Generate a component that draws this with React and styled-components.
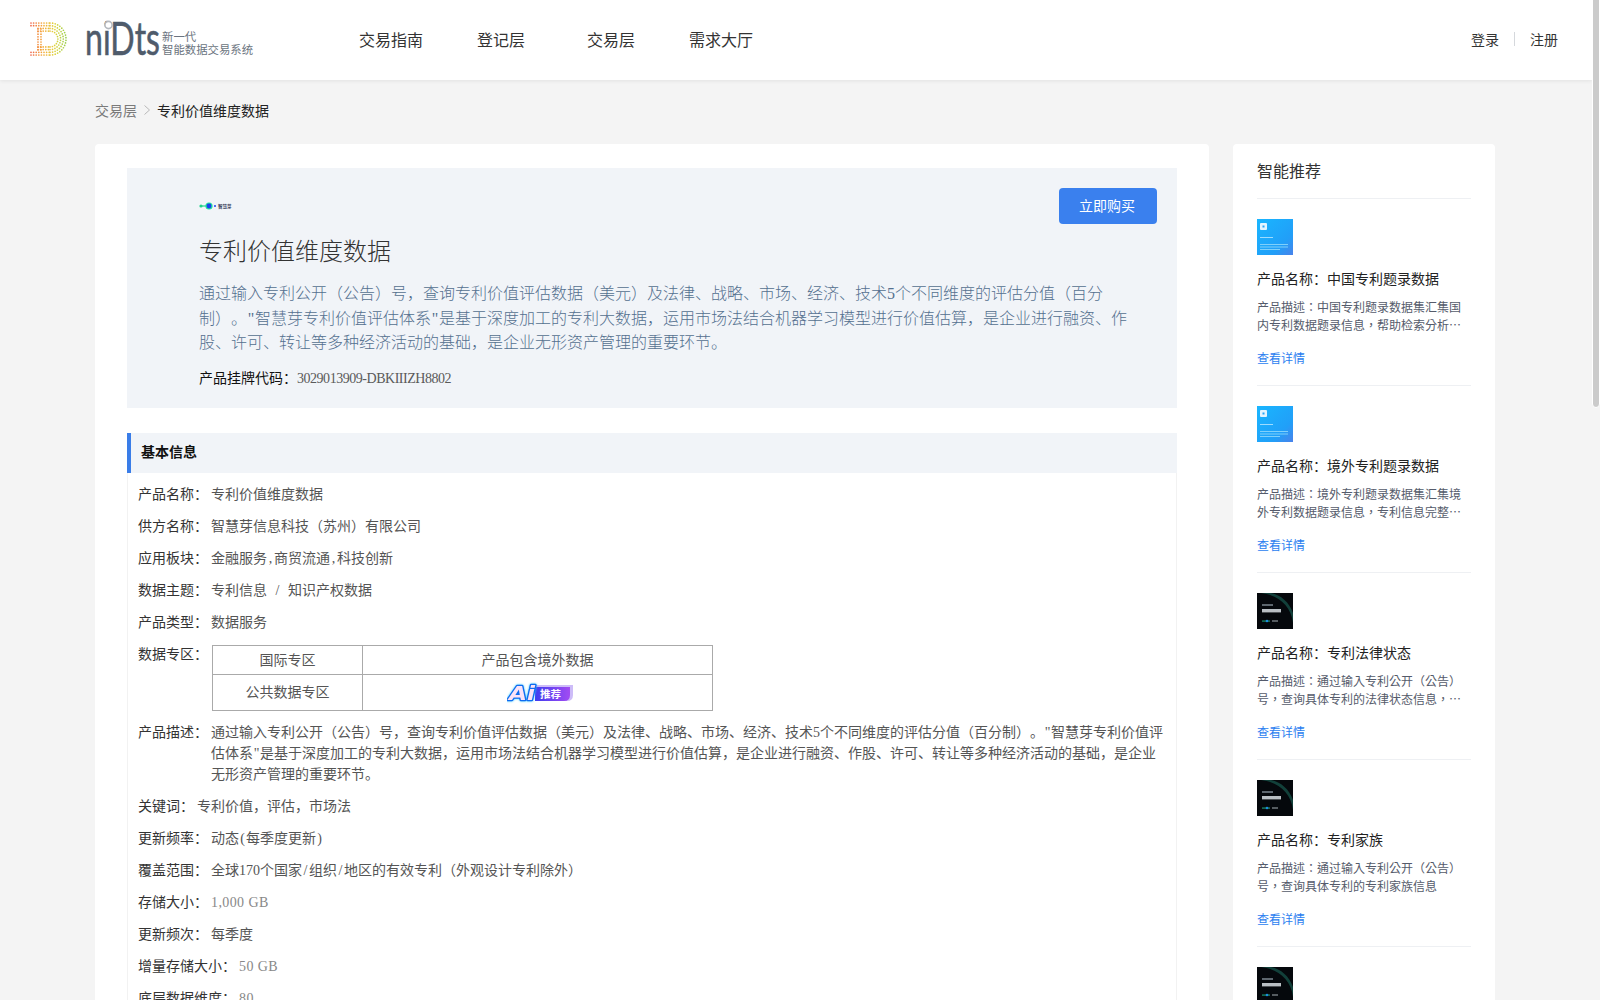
import React from 'react';
import styled, { createGlobalStyle } from 'styled-components';

const GlobalStyle = createGlobalStyle`
    html, body { background: #f4f4f4; }
    body {
        margin: 0;
        font-family: "Liberation Serif", "Noto Sans CJK SC", serif;
        font-size: 14px;
        color: #333;
        text-spacing-trim: space-all;
    }
`;

const Page = styled.div`
    min-height: 2450px;
    margin-right: 8px;
`;
// the window's own scrollbar does not get photographed
const ScrollThumb = styled.div`
    position: fixed;
    top: -4px;
    right: 0;
    width: 8px;
    height: 412px;
    box-sizing: border-box;
    background: #cbcbcb;
    border: 1px solid #fff;
    border-radius: 4px;
`;

const Header = styled.header`
    height: 80px;
    display: flex;
    align-items: center;
    padding: 0 34px 2px 30px;
    box-sizing: border-box;
    background: #fff;
    box-shadow: 0 1px 4px rgba(0, 0, 0, 0.08);
`;
const Brand = styled.div`
    width: 306px;
    display: flex;
    align-items: center;
`;
const Tagline = styled.div`
    margin: 10px 0 0 0;
    font-size: 11.4px;
    line-height: 13px;
    color: #6b7480;
    white-space: nowrap;
`;
const Nav = styled.nav`
    display: flex;
    flex: 1;
`;
const NavItem = styled.a`
    width: 110px;
    text-align: center;
    font-size: 16px;
    color: #333;
`;
const Auth = styled.div`
    display: flex;
    align-items: center;
    color: #333;
`;
const AuthSep = styled.span`
    width: 1px;
    height: 14px;
    margin: 0 15px;
    background: #d5d8dc;
`;

const Crumbs = styled.div`
    height: 64px;
    display: flex;
    align-items: center;
    padding: 0 0 5px 95px;
    box-sizing: border-box;
    color: #7a7a7a;
`;
const CrumbArrow = styled.svg`
    width: 10px;
    height: 12px;
    margin: 0 5px;
`;
const CrumbCurrent = styled.span`
    color: #222;
`;

const Content = styled.div`
    display: flex;
    align-items: flex-start;
    gap: 24px;
    padding-left: 95px;
`;
const Main = styled.main`
    width: 1114px;
    box-sizing: border-box;
    padding: 24px 32px 32px 32px;
    background: #fff;
    border-radius: 4px;
`;

const Hero = styled.section`
    height: 240px;
    box-sizing: border-box;
    padding: 20px 20px 0 72px;
    background: #f1f4f8;
`;
const HeroTop = styled.div`
    display: flex;
    align-items: center;
    justify-content: space-between;
    height: 36px;
`;
const MiniLogo = styled.div`
    display: flex;
    align-items: center;
    gap: 1px;
    font-size: 4.5px;
    font-weight: 700;
    color: #3c4460;
`;
const BuyButton = styled.button`
    width: 98px;
    height: 36px;
    padding: 0 2px 3px 0;
    border: 0;
    border-radius: 4px;
    background: #3a80ee;
    color: #fff;
    font-family: inherit;
    font-size: 14px;
`;
const HeroTitle = styled.h1`
    margin: 10px 0 0;
    font-size: 24px;
    line-height: 36px;
    font-weight: 300;
    color: #333;
`;
const HeroText = styled.p`
    max-width: 930px;
    margin: 12px 0 0;
    font-size: 16px;
    line-height: 24.5px;
    font-weight: 300;
    color: #54708f;
`;
const HeroCode = styled.div`
    margin-top: 12px;
    line-height: 22px;
    color: #5a5a5a;
`;
const HeroCodeLabel = styled.span`
    color: #111;
`;
const CodeValue = styled.span`
    letter-spacing: -0.47px;
`;
const HalfChar = styled.span`
    display: inline-block;
    width: 0.5em;
    text-align: center;
`;

const InfoSection = styled.section`
    margin-top: 25px;
    border: 1px solid #f2f2f2;
    border-width: 0 1px;
`;
const InfoHead = styled.h2`
    height: 40px;
    margin: 0 -1px 11px;
    padding-left: 10px;
    border-left: 4px solid #3a7de8;
    background: #f1f4f8;
    font-size: 14px;
    line-height: 40px;
    font-weight: 700;
    color: #111;
`;
const Row = styled.div`
    display: flex;
    margin-bottom: 11px;
    padding: 0 10px;
    line-height: 21px;
`;
const RowLabel = styled.span`
    flex-shrink: 0;
    margin-right: 3px;
    color: #333;
`;
const RowValue = styled.div`
    flex: 1;
    color: ${(p) => (p.$muted ? '#888' : '#555')};
    letter-spacing: ${(p) => (p.$muted ? '0.4px' : 'normal')};
`;
const ZoneTable = styled.table`
    width: 501px;
    margin: 1px 0 0 1px;
    border-collapse: collapse;
    table-layout: fixed;
`;
const ZoneCell = styled.td`
    width: ${(p) => (p.$narrow ? '149px' : 'auto')};
    height: ${(p) => p.$height}px;
    padding: 0;
    border: 1px solid #aaa;
    text-align: center;
    vertical-align: middle;
    color: #555;
`;
const BadgeArt = styled.svg`
    display: block;
    width: 68px;
    height: 22px;
    margin: 0 auto;
    transform: translateX(3px);
`;

const Side = styled.aside`
    width: 262px;
    box-sizing: border-box;
    padding: 17px 24px 0 24px;
    background: #fff;
    border-radius: 4px;
`;
const SideTitle = styled.h3`
    margin: 0;
    padding-bottom: 15px;
    border-bottom: 1px solid #eef0f3;
    font-size: 16px;
    line-height: 22px;
    font-weight: 400;
    color: #333;
`;
const Rec = styled.article`
    height: 187px;
    box-sizing: border-box;
    padding-top: 20px;
    border-bottom: 1px solid #eef0f3;
`;
const RecThumb = styled.svg`
    display: block;
    width: 36px;
    height: 36px;
`;
const RecName = styled.div`
    margin-top: 14px;
    line-height: 22px;
    color: #222;
`;
const RecText = styled.p`
    margin: 7px 0 0;
    height: 36px;
    font-family: "Noto Sans CJK TC", sans-serif;
    font-size: 12px;
    line-height: 18px;
    color: #555b6b;
    display: -webkit-box;
    -webkit-box-orient: vertical;
    -webkit-line-clamp: 2;
    overflow: hidden;
`;
const RecLink = styled.a`
    display: block;
    margin-top: 16px;
    font-size: 12px;
    line-height: 18px;
    color: #2b7ef0;
`;

// latin punctuation is half-width in the reference
const halfWidth = (str) =>
    str.split(/([,()\/"])/).map((part, i) =>
        i % 2 ? <HalfChar key={i}>{part}</HalfChar> : part
    );

const dotColor = (x) => {
    const stops = [[238, 96, 74], [245, 170, 60], [222, 212, 60], [140, 205, 80]];
    const t = Math.min(0.999, Math.max(0, x / 38)) * 3;
    const i = Math.floor(t);
    const f = t - i;
    const c = stops[i].map((v, n) => Math.round(v + (stops[i + 1][n] - v) * f));
    return `rgb(${c.join(',')})`;
};

const markDots = () => {
    const dots = [];
    for (let k = 0; k < 4; k++) {
        const inset = k * 2.7;
        const radius = 16 - inset;
        const start = k < 2 ? 1 : 8;
        for (let x = start; x < 20; x += 2.6) {
            dots.push([x, 1 + inset], [x, 33 - inset]);
        }
        const steps = Math.round((Math.PI * radius) / 2.6);
        for (let s = 0; s <= steps; s++) {
            const a = -Math.PI / 2 + (Math.PI * s) / steps;
            dots.push([20 + radius * Math.cos(a), 17 + radius * Math.sin(a)]);
        }
    }
    for (let y = 7; y < 28; y += 2.6) {
        dots.push([8, y], [11, y]);
    }
    return dots;
};

function BrandLogo() {
    return (
        <svg width="132" height="44" viewBox="0 0 132 44" style={{ display: 'block' }}>
            <g transform="translate(0 5)">
                {markDots().map(([x, y], i) => (
                    <circle key={i} cx={x} cy={y} r="0.85" fill={dotColor(x)} />
                ))}
            </g>
            <text x="55" y="38" fontFamily="Lato, sans-serif" fontSize="46" fontWeight="400"
                fill="#4f5b6b" stroke="#4f5b6b" strokeWidth="0.6"
                textLength="75" lengthAdjust="spacingAndGlyphs">niDts</text>
            <circle cx="78.5" cy="8" r="3.6" fill="#fff" stroke="#b4b8be" strokeWidth="1.6" />
        </svg>
    );
}

function BlueThumb() {
    return (
        <RecThumb viewBox="0 0 36 36">
            <defs>
                <linearGradient id="thumbBlue" x1="0" y1="0" x2="1" y2="1">
                    <stop offset="0" stopColor="#19b6ff" />
                    <stop offset="0.7" stopColor="#219ff8" />
                    <stop offset="1" stopColor="#4a82ea" />
                </linearGradient>
                <filter id="thumbSoft"><feGaussianBlur stdDeviation="0.5" /></filter>
            </defs>
            <rect width="36" height="36" fill="url(#thumbBlue)" />
            <g filter="url(#thumbSoft)">
                <rect x="3" y="4" width="7" height="7" rx="1" fill="#e4f5ff" />
                <rect x="5.5" y="6.5" width="2" height="2" fill="#2aa5f5" />
                <rect x="3" y="18" width="13" height="1" fill="#9ddcff" />
                <rect x="3" y="25" width="28" height="1" fill="#7fd0fb" />
                <rect x="3" y="27.5" width="28" height="1" fill="#7fd0fb" />
                <rect x="3" y="30" width="20" height="1" fill="#7fd0fb" />
            </g>
        </RecThumb>
    );
}

function DarkThumb() {
    return (
        <RecThumb viewBox="0 0 36 36">
            <defs>
                <filter id="darkSoft"><feGaussianBlur stdDeviation="0.45" /></filter>
            </defs>
            <rect width="36" height="36" fill="#05080c" />
            <path d="M4 0 C20 2 34 12 36 30 L36 20 C32 9 24 2 14 0 Z" fill="#12403a" />
            <g filter="url(#darkSoft)">
                <rect x="5" y="11" width="11" height="2" fill="#5d666e" />
                <rect x="5" y="16" width="19" height="3.4" fill="#b9bfc4" />
            </g>
            <rect x="5" y="27.6" width="8" height="0.9" fill="#22c28e" />
            <circle cx="10" cy="28" r="1.3" fill="#1b8ddd" />
            <rect x="15" y="27.4" width="6" height="1.2" fill="#8b9298" />
        </RecThumb>
    );
}

function AiBadge() {
    return (
        <BadgeArt viewBox="0 0 68 22">
            <defs>
                <linearGradient id="aiPurple" x1="0" y1="0" x2="1" y2="0">
                    <stop offset="0" stopColor="#3f3cf0" />
                    <stop offset="1" stopColor="#a24bf2" />
                </linearGradient>
            </defs>
            <path d="M28 3 H66 V13 Q66 19 60 19 H28 Z" fill="#cdbcf8" />
            <path d="M28 5 H63 V13 Q63 19 57 19 H28 Z" fill="url(#aiPurple)" />
            <text x="2" y="18" fontFamily='"DejaVu Sans", sans-serif' fontSize="20" fontWeight="700" fontStyle="italic"
                textLength="26" lengthAdjust="spacingAndGlyphs"
                fill="#fbe3f6" stroke="#0f6cf0" strokeWidth="2.4" strokeLinejoin="round" paintOrder="stroke"
                style={{ filter: 'drop-shadow(0 0 1px #3cd0ff)' }}>Ai</text>
            <text x="33" y="16" fontFamily='"Noto Sans CJK SC", sans-serif' fontSize="10.5" fontWeight="700" fill="#fff">推荐</text>
        </BadgeArt>
    );
}

const INFO_TOP = [
    ['产品名称：', '专利价值维度数据'],
    ['供方名称：', '智慧芽信息科技（苏州）有限公司'],
    ['应用板块：', '金融服务,商贸流通,科技创新'],
    ['数据主题：', '专利信息\u00a0 / \u00a0知识产权数据'],
    ['产品类型：', '数据服务'],
];

const INFO_BOTTOM = [
    ['产品描述：', '通过输入专利公开（公告）号，查询专利价值评估数据（美元）及法律、战略、市场、经济、技术5个不同维度的评估分值（百分制）。"智慧芽专利价值评估体系"是基于深度加工的专利大数据，运用市场法结合机器学习模型进行价值估算，是企业进行融资、作股、许可、转让等多种经济活动的基础，是企业无形资产管理的重要环节。'],
    ['关键词：', '专利价值，评估，市场法'],
    ['更新频率：', '动态(每季度更新)'],
    ['覆盖范围：', '全球170个国家/组织/地区的有效专利（外观设计专利除外）'],
    ['存储大小：', '1,000 GB', true],
    ['更新频次：', '每季度'],
    ['增量存储大小：', '50 GB', true],
    ['底层数据维度：', '80', true],
];

const RECS = [
    { id: 1, thumb: 'blue', name: '产品名称：中国专利题录数据', text: '产品描述：中国专利题录数据集汇集国内专利数据题录信息，帮助检索分析专利的基本情况，了解技术发展方向' },
    { id: 2, thumb: 'blue', name: '产品名称：境外专利题录数据', text: '产品描述：境外专利题录数据集汇集境外专利数据题录信息，专利信息完整全面，覆盖全球主要国家和地区' },
    { id: 3, thumb: 'dark', name: '产品名称：专利法律状态', text: '产品描述：通过输入专利公开（公告）号，查询具体专利的法律状态信息，了解专利的当前有效情况' },
    { id: 4, thumb: 'dark', name: '产品名称：专利家族', text: '产品描述：通过输入专利公开（公告）号，查询具体专利的专利家族信息' },
];

const HERO_TEXT = '通过输入专利公开（公告）号，查询专利价值评估数据（美元）及法律、战略、市场、经济、技术5个不同维度的评估分值（百分制）。"智慧芽专利价值评估体系"是基于深度加工的专利大数据，运用市场法结合机器学习模型进行价值估算，是企业进行融资、作股、许可、转让等多种经济活动的基础，是企业无形资产管理的重要环节。';

export default function App() {
    return (
        <Page>
            <GlobalStyle />
            <ScrollThumb />
            <Header>
                <Brand>
                    <BrandLogo />
                    <Tagline>新一代<br />智能数据交易系统</Tagline>
                </Brand>
                <Nav>
                    <NavItem>交易指南</NavItem>
                    <NavItem>登记层</NavItem>
                    <NavItem>交易层</NavItem>
                    <NavItem>需求大厅</NavItem>
                </Nav>
                <Auth>
                    <span>登录</span>
                    <AuthSep />
                    <span>注册</span>
                </Auth>
            </Header>

            <Crumbs>
                交易层
                <CrumbArrow viewBox="0 0 10 12">
                    <path d="M2.5 1.5 L7.5 6 L2.5 10.5" fill="none" stroke="#b9b9b9" strokeWidth="1" />
                </CrumbArrow>
                <CrumbCurrent>专利价值维度数据</CrumbCurrent>
            </Crumbs>

            <Content>
                <Main>
                    <Hero>
                        <HeroTop>
                            <MiniLogo>
                                <svg width="18" height="8" viewBox="0 0 18 8">
                                    <circle cx="2" cy="4" r="1.6" fill="#1fd48c" />
                                    <rect x="3" y="3.4" width="4" height="1.2" fill="#1fd48c" />
                                    <circle cx="10" cy="4" r="3.6" fill="#21dca0" />
                                    <circle cx="10" cy="4" r="2.4" fill="#1a3ff0" />
                                    <rect x="15" y="3.2" width="2" height="1.6" fill="#2a50f0" />
                                </svg>
                                <span>智慧芽</span>
                            </MiniLogo>
                            <BuyButton>立即购买</BuyButton>
                        </HeroTop>
                        <HeroTitle>专利价值维度数据</HeroTitle>
                        <HeroText>{halfWidth(HERO_TEXT)}</HeroText>
                        <HeroCode>
                            <HeroCodeLabel>产品挂牌代码：</HeroCodeLabel>
                            <CodeValue>3029013909-DBKIIIZH8802</CodeValue>
                        </HeroCode>
                    </Hero>

                    <InfoSection>
                        <InfoHead>基本信息</InfoHead>
                        {INFO_TOP.map(([label, value]) => (
                            <Row key={label}>
                                <RowLabel>{label}</RowLabel>
                                <RowValue>{halfWidth(value)}</RowValue>
                            </Row>
                        ))}
                        <Row>
                            <RowLabel>数据专区：</RowLabel>
                            <RowValue>
                                <ZoneTable>
                                    <tbody>
                                        <tr>
                                            <ZoneCell $narrow $height={28}>国际专区</ZoneCell>
                                            <ZoneCell $height={28}>产品包含境外数据</ZoneCell>
                                        </tr>
                                        <tr>
                                            <ZoneCell $narrow $height={35}>公共数据专区</ZoneCell>
                                            <ZoneCell $height={35}><AiBadge /></ZoneCell>
                                        </tr>
                                    </tbody>
                                </ZoneTable>
                            </RowValue>
                        </Row>
                        {INFO_BOTTOM.map(([label, value, muted]) => (
                            <Row key={label}>
                                <RowLabel>{label}</RowLabel>
                                <RowValue $muted={muted}>{muted ? value : halfWidth(value)}</RowValue>
                            </Row>
                        ))}
                    </InfoSection>
                </Main>

                <Side>
                    <SideTitle>智能推荐</SideTitle>
                    {RECS.map((rec) => (
                        <Rec key={rec.id}>
                            {rec.thumb === 'blue' ? <BlueThumb /> : <DarkThumb />}
                            <RecName>{rec.name}</RecName>
                            <RecText lang="zh-TW">{rec.text}</RecText>
                            <RecLink>查看详情</RecLink>
                        </Rec>
                    ))}
                    <Rec><DarkThumb /></Rec>
                </Side>
            </Content>
        </Page>
    );
}
